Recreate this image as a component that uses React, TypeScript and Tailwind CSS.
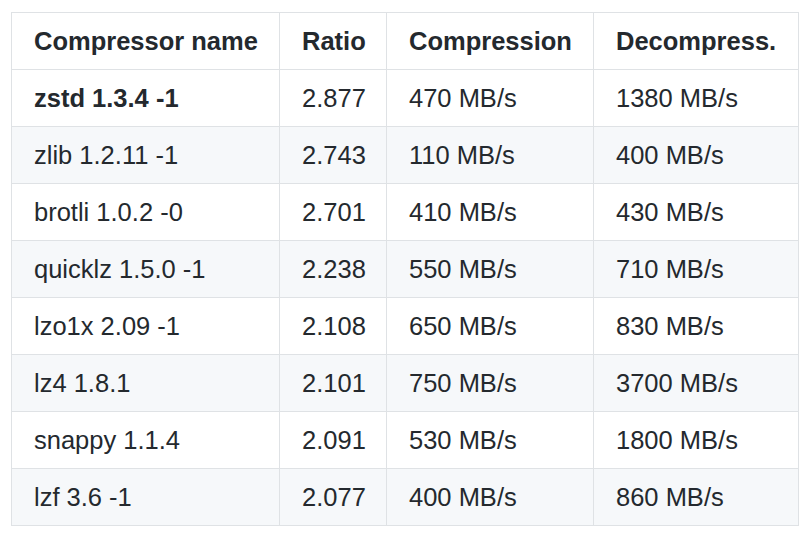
import React from 'react';

const rows = [
  ['zstd 1.3.4 -1', '2.877', '470 MB/s', '1380 MB/s'],
  ['zlib 1.2.11 -1', '2.743', '110 MB/s', '400 MB/s'],
  ['brotli 1.0.2 -0', '2.701', '410 MB/s', '430 MB/s'],
  ['quicklz 1.5.0 -1', '2.238', '550 MB/s', '710 MB/s'],
  ['lzo1x 2.09 -1', '2.108', '650 MB/s', '830 MB/s'],
  ['lz4 1.8.1', '2.101', '750 MB/s', '3700 MB/s'],
  ['snappy 1.1.4', '2.091', '530 MB/s', '1800 MB/s'],
  ['lzf 3.6 -1', '2.077', '400 MB/s', '860 MB/s'],
];

const headers = ['Compressor name', 'Ratio', 'Compression', 'Decompress.'];
const widths = ['w-[268px]', 'w-[107px]', 'w-[207px]', 'w-[205px]'];

export default function App() {
  return (
    <div className="w-[809px] h-[536px] bg-white pt-[12px] pl-[11px] font-['Liberation_Sans',Arial,sans-serif] text-[#24292e]">
      <table className="border-collapse table-fixed w-[787px] text-[25.5px] leading-[38px] whitespace-nowrap">
        <colgroup>
          {widths.map((w, i) => (
            <col key={i} className={w} />
          ))}
        </colgroup>
        <thead>
          <tr className="bg-white">
            {headers.map((h) => (
              <th key={h} className="border border-[#dfe2e5] pl-[22px] pr-0 py-[9px] text-left font-bold">
                {h}
              </th>
            ))}
          </tr>
        </thead>
        <tbody>
          {rows.map((r, i) => (
            <tr key={i} className={i % 2 === 1 ? 'bg-[#f6f8fa]' : 'bg-white'}>
              {r.map((c, j) => (
                <td
                  key={j}
                  className={`border border-[#dfe2e5] pl-[22px] pr-0 py-[9px] ${i === 0 && j === 0 ? 'font-bold' : ''}`}
                >
                  {c}
                </td>
              ))}
            </tr>
          ))}
        </tbody>
      </table>
    </div>
  );
}
